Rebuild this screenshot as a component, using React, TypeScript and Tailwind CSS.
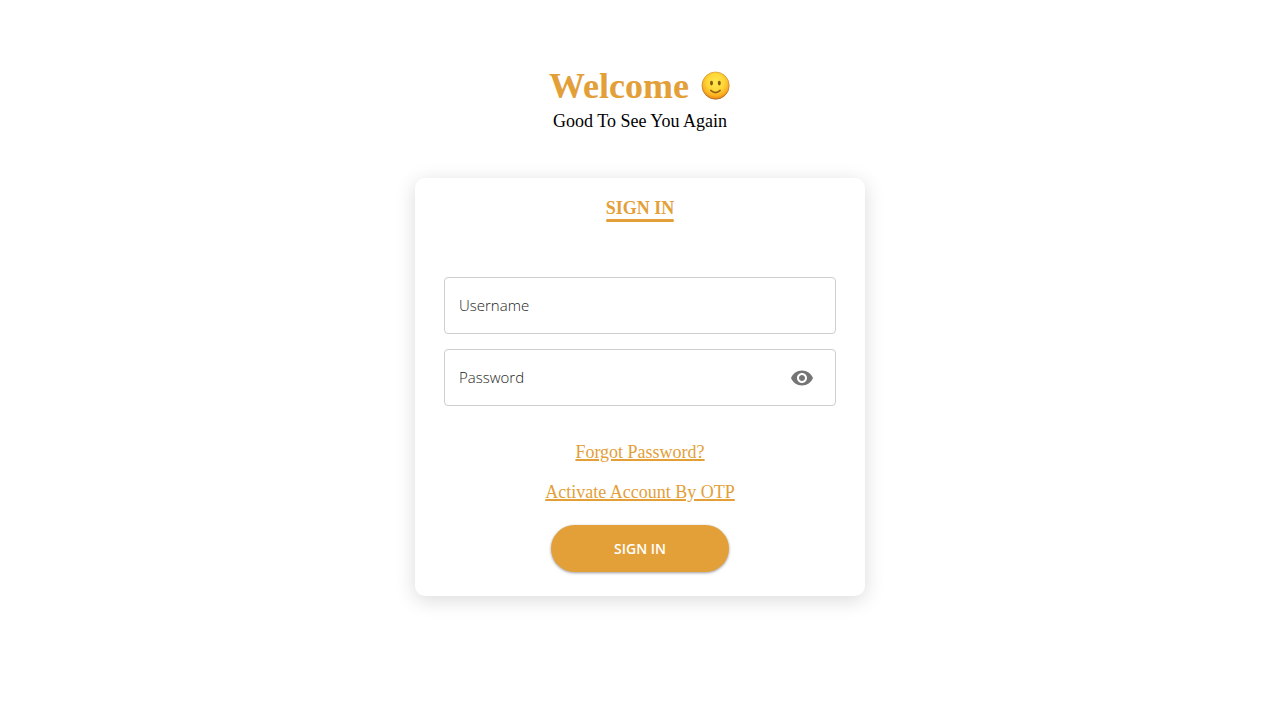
import { useState, type FormEvent } from "react";
import { MdVisibility, MdVisibilityOff } from "react-icons/md";

const fieldClass =
  "h-[57px] w-full rounded border border-[#cfcfcf] bg-white px-[14px] pb-0.5 font-['Open_Sans','Noto_Sans',sans-serif] text-[15px] font-light text-[#222222] outline-none placeholder:text-[#222222] placeholder:opacity-100 focus:border-[#e3a039]";

const linkClass =
  "text-lg leading-6 text-[#e3a039] underline decoration-2 underline-offset-1";

function Smile() {
  return (
    <svg viewBox="0 0 30 30" className="size-[30px]" role="img" aria-label="Smiling face">
      <defs>
        <radialGradient id="face" cx="50%" cy="38%" r="62%">
          <stop offset="0" stopColor="#ffe94f" />
          <stop offset="0.5" stopColor="#ffd73a" />
          <stop offset="0.8" stopColor="#fbb021" />
          <stop offset="1" stopColor="#e8830f" />
        </radialGradient>
        <linearGradient id="rim" x1="0" y1="0" x2="0" y2="1">
          <stop offset="0" stopColor="#d9a437" />
          <stop offset="1" stopColor="#a8622a" />
        </linearGradient>
      </defs>
      <circle cx="14.6" cy="14.6" r="13.6" fill="url(#face)" stroke="url(#rim)" strokeWidth="0.8" />
      <ellipse cx="10.5" cy="12.1" rx="1.5" ry="2.4" fill="#85590f" />
      <ellipse cx="18.3" cy="12.1" rx="1.5" ry="2.4" fill="#85590f" />
      <path d="M9.8 19.4Q14.5 23.8 19.2 19.4" fill="none" stroke="#94600f" strokeWidth="1.5" strokeLinecap="round" />
    </svg>
  );
}

export default function App() {
  const [visible, setVisible] = useState(false);
  const submit = (event: FormEvent) => event.preventDefault();

  return (
    <main className="flex min-h-screen flex-col items-center bg-white px-4 pt-16 pb-16 font-['Liberation_Serif',serif] text-black">
      <header className="flex flex-col items-center">
        <h1 className="flex items-center gap-3 text-4xl leading-[44px] font-bold text-[#e3a039]">
          <span>Welcome</span>
          <Smile />
        </h1>
        <p className="text-lg leading-[26px]">Good To See You Again</p>
      </header>

      <section className="mt-11 flex w-full max-w-[450px] flex-col items-center rounded-[10px] bg-white px-[29px] pt-5 pb-6 shadow-[0_4px_20px_rgba(0,0,0,0.15)]">
        <h2 className="flex flex-col text-lg leading-[21px] font-bold text-[#e3a039]">
          SIGN IN
          <span aria-hidden="true" className="h-[3px] rounded-xs bg-[#e3a039]" />
        </h2>

        <form onSubmit={submit} className="mt-[55px] flex w-full flex-col items-center">
          <input
            type="text"
            name="username"
            aria-label="Username"
            placeholder="Username"
            autoComplete="username"
            className={fieldClass}
          />

          <div className="relative mt-[15px] w-full">
            <input
              type={visible ? "text" : "password"}
              name="password"
              aria-label="Password"
              placeholder="Password"
              autoComplete="current-password"
              className={fieldClass}
            />
            <button
              type="button"
              aria-label={visible ? "Hide password" : "Show password"}
              onClick={() => setVisible(!visible)}
              className="absolute inset-y-0 right-[22px] flex items-center text-[#757575]"
            >
              {visible ? <MdVisibilityOff className="size-6" /> : <MdVisibility className="size-6" />}
            </button>
          </div>

          <div className="mt-[34px] flex flex-col items-center gap-4">
            <a href="#forgot-password" className={linkClass}>Forgot Password?</a>
            <a href="#activate-account" className={linkClass}>Activate Account By OTP</a>
          </div>

          <button
            type="submit"
            className="mt-[21px] h-[47px] w-[178px] rounded-full bg-[#e3a039] font-['Open_Sans','Noto_Sans',sans-serif] text-sm leading-5 font-semibold text-white shadow-[0_1px_3px_rgba(0,0,0,0.4)]"
          >
            SIGN IN
          </button>
        </form>
      </section>
    </main>
  );
}
